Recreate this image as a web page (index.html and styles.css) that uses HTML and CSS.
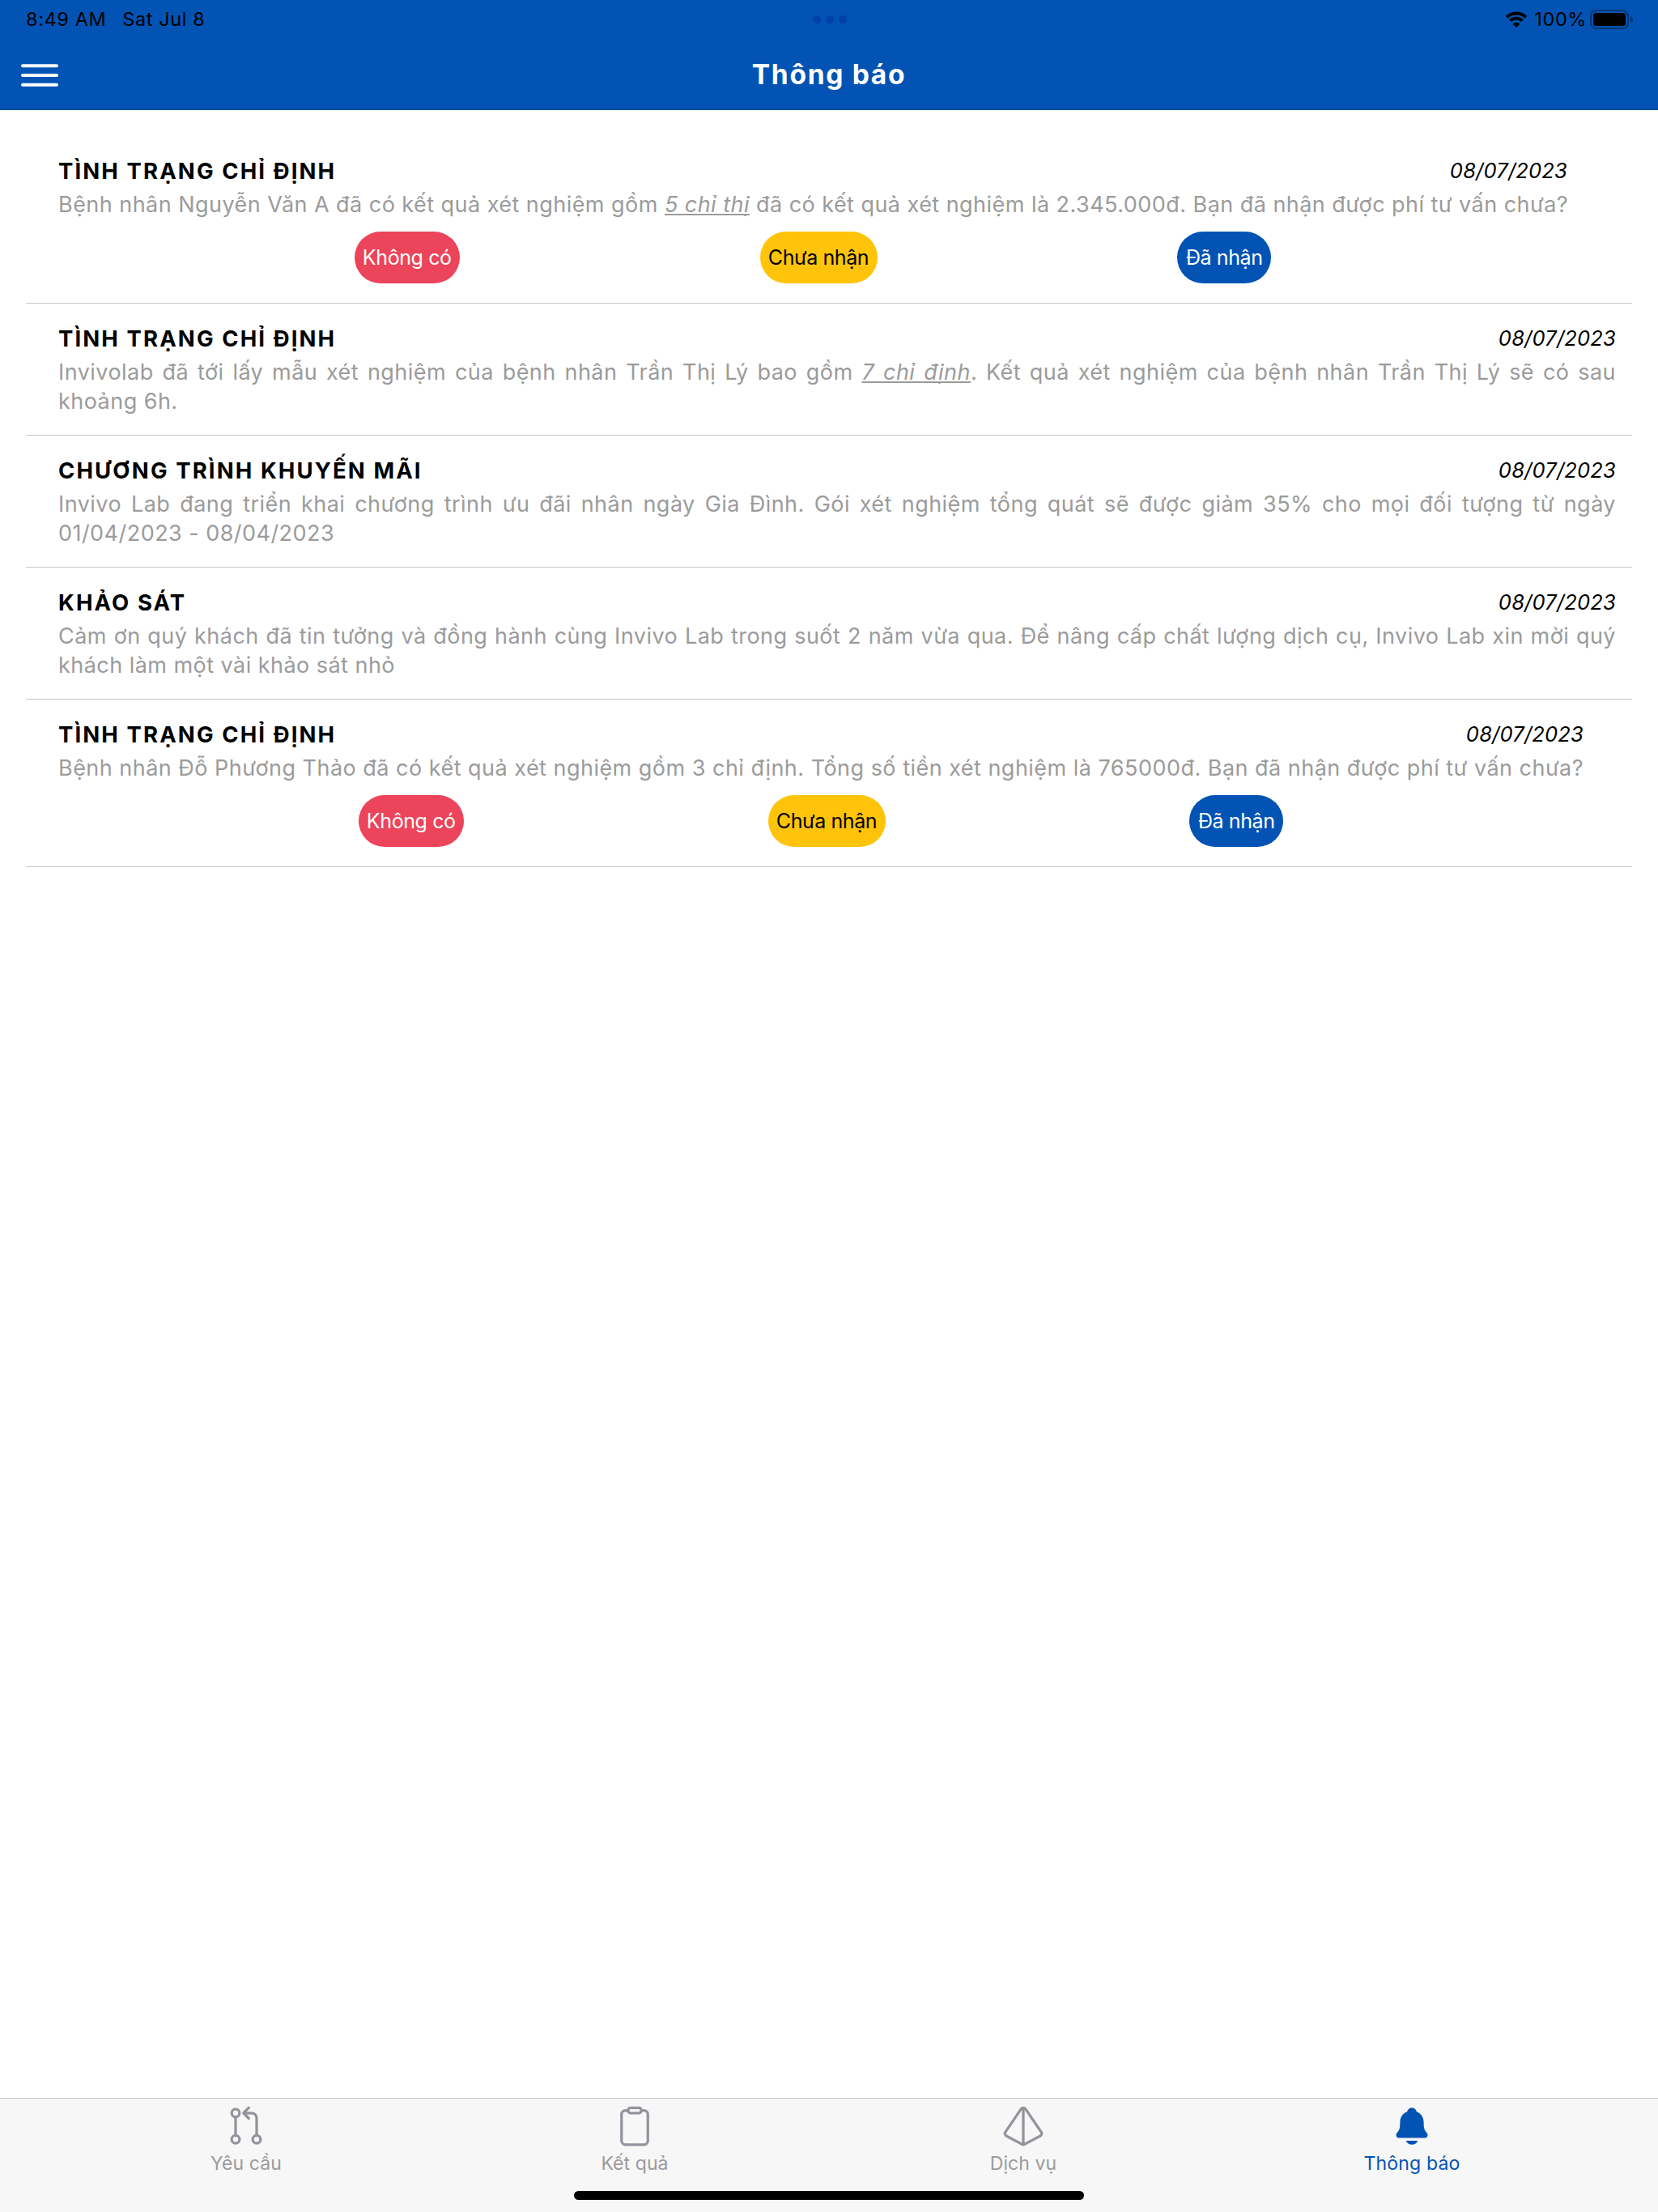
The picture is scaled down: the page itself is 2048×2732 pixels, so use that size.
FILE: index.html
```
<!DOCTYPE html>
<html lang="vi">
<head>
<meta charset="utf-8">
<title>Thông báo</title>
<link rel="stylesheet" href="styles.css">
</head>
<body>
<div class="screen">
  <header class="header">
    <div class="status">
      <div class="status-side">
        <span>8:49 AM</span>
        <span>Sat Jul 8</span>
      </div>
      <svg class="dots" width="42" height="10" viewBox="0 0 42 10"><circle cx="5" cy="5" r="5"/><circle cx="21" cy="5" r="5"/><circle cx="37" cy="5" r="5"/></svg>
      <div class="status-side status-right">
        <svg class="wifi" width="28" height="20" viewBox="0 0 28 20">
          <path d="M2.2 7.2A17 17 0 0 1 25.8 7.2" /><path d="M6.7 11.7A10.4 10.4 0 0 1 21.3 11.7"/>
          <path class="solid" d="M14 20L9.5 15.6a6.4 6.4 0 0 1 9 0z"/>
        </svg>
        <span class="percent">100%</span>
        <svg class="battery" width="54" height="24" viewBox="0 0 54 24">
          <rect class="shell" x="1" y="1" width="46" height="22" rx="6.5"/>
          <rect x="4" y="4" width="40" height="16" rx="3.5"/>
          <path class="nub" d="M50 8c4 1.5 4 6.500 0 8z"/>
        </svg>
      </div>
    </div>
    <div class="navbar">
      <svg class="menu" width="46" height="28" viewBox="0 0 46 28"><path d="M2 2.300h42M2 14h42M2 25.700h42"/></svg>
      <h1 class="nav-title">Thông báo</h1>
    </div>
  </header>

  <main class="list">
    <article class="notice">
      <div class="body body-first">
        <div class="head"><h2 class="title">TÌNH TRẠNG CHỈ ĐỊNH</h2><time class="date">08/07/2023</time></div>
        <p class="text one-line">Bệnh nhân Nguyễn Văn A đã có kết quả xét nghiệm gồm <span class="link">5 chỉ thị</span> đã có kết quả xét nghiệm là 2.345.000đ. Bạn đã nhận được phí tư vấn chưa?</p>
        <div class="actions"><button class="btn none">Không có</button><button class="btn pending">Chưa nhận</button><button class="btn done">Đã nhận</button></div>
      </div>
    </article>
    <article class="notice">
      <div class="body">
        <div class="head"><h2 class="title">TÌNH TRẠNG CHỈ ĐỊNH</h2><time class="date">08/07/2023</time></div>
        <p class="text">Invivolab đã tới lấy mẫu xét nghiệm của bệnh nhân Trần Thị Lý bao gồm <span class="link">7 chỉ định</span>. Kết quả xét nghiệm của bệnh nhân Trần Thị Lý sẽ có sau khoảng 6h.</p>
      </div>
    </article>
    <article class="notice">
      <div class="body">
        <div class="head"><h2 class="title">CHƯƠNG TRÌNH KHUYẾN MÃI</h2><time class="date">08/07/2023</time></div>
        <p class="text">Invivo Lab đang triển khai chương trình ưu đãi nhân ngày Gia Đình. Gói xét nghiệm tổng quát sẽ được giảm 35% cho mọi đối tượng từ ngày 01/04/2023 - 08/04/2023</p>
      </div>
    </article>
    <article class="notice">
      <div class="body">
        <div class="head"><h2 class="title">KHẢO SÁT</h2><time class="date">08/07/2023</time></div>
        <p class="text">Cảm ơn quý khách đã tin tưởng và đồng hành cùng Invivo Lab trong suốt 2 năm vừa qua. Để nâng cấp chất lượng dịch cụ, Invivo Lab xin mời quý khách làm một vài khảo sát nhỏ</p>
      </div>
    </article>
    <article class="notice">
      <div class="body body-last">
        <div class="head"><h2 class="title">TÌNH TRẠNG CHỈ ĐỊNH</h2><time class="date">08/07/2023</time></div>
        <p class="text one-line">Bệnh nhân Đỗ Phương Thảo đã có kết quả xét nghiệm gồm 3 chỉ định. Tổng số tiền xét nghiệm là 765000đ. Bạn đã nhận được phí tư vấn chưa?</p>
        <div class="actions"><button class="btn none">Không có</button><button class="btn pending">Chưa nhận</button><button class="btn done">Đã nhận</button></div>
      </div>
    </article>
  </main>

  <footer class="footer">
    <nav class="tabs">
      <a class="tab">
        <svg class="icon" viewBox="0 0 512 512"><circle cx="128" cy="416" r="48"/><path d="M128 144v224M288 160l-64-64 64-64"/><circle cx="128" cy="96" r="48"/><circle cx="384" cy="416" r="48"/><path d="M240 96h84a60 60 0 0 1 60 60v212"/></svg>
        <span>Yêu cầu</span>
      </a>
      <a class="tab">
        <svg class="icon" viewBox="0 0 512 512"><path d="M336 64h32a48 48 0 0 1 48 48v320a48 48 0 0 1-48 48H144a48 48 0 0 1-48-48V112a48 48 0 0 1 48-48h32"/><rect x="176" y="32" width="160" height="64" rx="26.130"/></svg>
        <span>Kết quả</span>
      </a>
      <a class="tab">
        <svg class="icon" viewBox="0 0 512 512"><path d="M229.730 45.880L37.530 327.790a31.790 31.790 0 0 0 11.310 46L241 476.260a31.770 31.770 0 0 0 29.920 0l192.200-102.510a31.790 31.790 0 0 0 11.310-46L282.270 45.880a31.800 31.800 0 0 0-52.540 0zM256 32v448"/></svg>
        <span>Dịch vụ</span>
      </a>
      <a class="tab active">
        <svg class="icon" viewBox="0 0 512 512"><path d="M440.080 341.310c-1.660-2-3.290-4-4.890-5.930-22-26.610-35.310-42.670-35.310-118 0-39-9.330-71-27.720-95-13.560-17.730-31.890-31.180-56.050-41.120a3 3 0 0 1-.820-.670C306.600 51.490 282.820 32 256 32s-50.590 19.490-59.280 48.560a3.130 3.130 0 0 1-.810.650c-56.380 23.210-83.780 67.740-83.780 136.140 0 75.360-13.290 91.420-35.310 118-1.600 1.930-3.230 3.890-4.890 5.930a35.160 35.160 0 0 0-4.650 37.620c6.170 13 19.320 21.070 34.330 21.070H410.500c14.940 0 28-8.060 34.190-21a35.170 35.170 0 0 0-4.610-37.660zM256 480a80.060 80.060 0 0 0 70.440-42.130 4 4 0 0 0-3.540-5.870H189.120a4 4 0 0 0-3.550 5.860A80.060 80.060 0 0 0 256 480z"/></svg>
        <span>Thông báo</span>
      </a>
    </nav>
    <div class="home-bar"></div>
  </footer>
</div>
</body>
</html>
```
FILE: styles.css
```
* { box-sizing: border-box; }
body { margin: 0; font-family: Inter, "Noto Sans", sans-serif; color: #000; background: #fff; }
.screen { width: 2048px; height: 2732px; display: flex; flex-direction: column; overflow: hidden; }

.header { height: 136px; background: #0253b4; border-bottom: 1px solid #02448f; }
.status { height: 48px; display: grid; grid-template-columns: 1fr auto 1fr; align-items: center; padding: 0 30px 0 32px; font-size: 23.500px; letter-spacing: .6px; }
.status-side { display: flex; align-items: center; gap: 20px; white-space: nowrap; }
.status-side span { line-height: 28px; padding-bottom: 1px; }
.status-right { justify-content: flex-end; gap: 0; }
.dots { fill: #0040a8; }
.wifi { fill: none; stroke: #000; stroke-width: 4; }
.wifi .solid { fill: #000; stroke: none; }
.status-side .percent { margin: 0 4px 0 8px; }
.battery .shell { fill: none; stroke: #013676; stroke-width: 2; }
.battery .nub { fill: #013676; }
.navbar { height: 88px; display: grid; grid-template-columns: 1fr auto 1fr; align-items: center; padding: 2px 26px 0; }
.menu { stroke: #fff; stroke-width: 4; stroke-linecap: round; }
.nav-title { margin: 0; padding-bottom: 2px; color: #fff; font-size: 33.500px; line-height: 40px; font-weight: 700; letter-spacing: 1.700px; }

.list { flex: 1; padding: 32px 32px 0; }
.notice { padding: 25px 20px 24px 40px; border-bottom: 1px solid #c6c6c8; }
.body-first { width: 1864px; }
.body-last { width: 1884px; }
.head { display: flex; justify-content: space-between; height: 36px; margin-bottom: 6px; line-height: 36px; }
.title { margin: 0; font-size: 27.500px; font-weight: 700; letter-spacing: 2.100px; line-height: 36px; }
.date { font-size: 25.500px; font-style: italic; letter-spacing: .2px; line-height: 35px; }
.text { margin: 0 0 -1px; color: #9b9b9b; font-size: 27px; line-height: 36px; letter-spacing: .460px; text-align: justify; }
.one-line { white-space: nowrap; text-align-last: justify; }
.link { font-style: italic; text-decoration: underline; text-decoration-thickness: 2px; text-underline-offset: 2px; text-decoration-skip-ink: none; }
.actions { display: flex; justify-content: space-evenly; gap: 5px; margin-top: 16px; }
.btn { height: 64px; padding: 0; border: 0; border-radius: 32px; font: 400 25px/64px Inter, "Noto Sans", sans-serif; letter-spacing: -.4px; }
.none { width: 130px; background: #ec445a; color: #fff; }
.pending { width: 145px; background: #ffc40a; color: #000; }
.done { width: 116px; background: #0253b4; color: #fff; }

.footer { height: 141px; background: #f7f7f7; border-top: 1px solid #c4c6c6; display: flex; flex-direction: column; align-items: center; }
.tabs { width: 1920px; height: 114px; display: grid; grid-template-columns: repeat(4, 1fr); padding-top: 8px; }
.tab { display: flex; flex-direction: column; align-items: center; color: #9b9b9b; font-size: 23px; line-height: 28px; letter-spacing: .1px; gap: 6px; }
.icon { width: 52px; height: 52px; fill: none; stroke: #92949c; stroke-width: 32; stroke-linecap: round; stroke-linejoin: round; }
.active { color: #0253b4; letter-spacing: .2px; }
.active .icon { fill: #0253b4; stroke: none; }
.home-bar { width: 630px; height: 11px; border-radius: 6px; background: #000; }
```
